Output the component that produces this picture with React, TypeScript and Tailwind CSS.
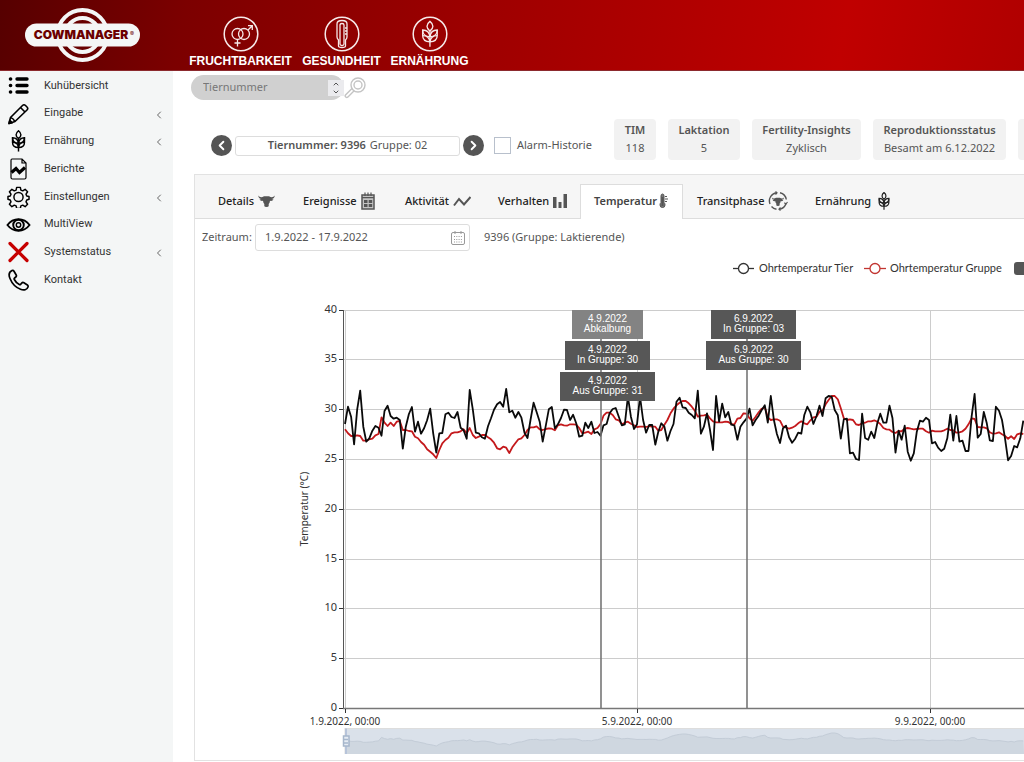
import React from 'react';
import { ChevronDown, ChevronLeft, ChevronRight, ChevronUp } from 'lucide-react';

// Hourly ear temperature samples, measured in thirds of a pixel below BAND_TOP
const BAND_TOP = 370;
const PLOT_LEFT = 345;
const DAY_WIDTH = 73;

const animalSamples = [
  162, 110, 140, 223, 118, 62, 170, 215, 205, 182, 168, 173, 197, 123, 107, 138, 146, 143, 150, 236, 170, 132, 111, 185,
  155, 191, 175, 151, 116, 190, 248, 190, 189, 133, 128, 141, 144, 126, 173, 181, 206, 60, 118, 188, 190, 202, 206, 169,
  145, 119, 103, 96, 110, 57, 127, 122, 143, 126, 143, 188, 204, 150, 98, 126, 155, 215, 167, 118, 111, 175, 163, 144,
  119, 120, 150, 134, 160, 200, 197, 158, 174, 155, 189, 186, 197, 166, 162, 130, 117, 114, 140, 166, 163, 80, 140, 177,
  163, 80, 150, 188, 165, 165, 224, 185, 160, 170, 212, 183, 162, 95, 83, 112, 114, 128, 135, 145, 62, 191, 170, 130,
  180, 240, 78, 155, 101, 142, 126, 164, 166, 209, 170, 157, 146, 116, 166, 150, 137, 120, 106, 158, 78, 150, 192, 219,
  175, 167, 202, 218, 206, 188, 191, 135, 110, 128, 162, 138, 107, 138, 85, 78, 80, 120, 136, 206, 148, 146, 250, 248,
  267, 270, 131, 204, 209, 185, 204, 160, 131, 158, 158, 107, 145, 248, 182, 209, 167, 245, 272, 250, 185, 152, 155, 143,
  150, 220, 216, 233, 243, 236, 205, 134, 212, 138, 215, 212, 243, 243, 140, 72, 203, 192, 126, 160, 211, 213, 110, 122,
  150, 205, 271, 258, 228, 232, 205, 152,
];

const groupSamples = [
  178, 190, 198, 198, 196, 198, 212, 212, 208, 206, 196, 192, 142, 158, 168, 158, 168, 155, 153, 180, 180, 183, 184, 200,
  205, 216, 224, 238, 245, 253, 264, 240, 220, 210, 203, 190, 187, 187, 184, 178, 190, 174, 195, 204, 200, 195, 195, 202,
  208, 218, 235, 238, 230, 233, 249, 232, 220, 208, 205, 195, 180, 172, 172, 169, 178, 180, 177, 175, 176, 181, 166, 163,
  166, 167, 163, 163, 164, 174, 190, 188, 185, 192, 178, 174, 162, 137, 128, 128, 135, 148, 151, 163, 158, 155, 161, 166,
  171, 170, 170, 171, 168, 170, 170, 182, 180, 164, 150, 130, 116, 106, 98, 93, 93, 100, 110, 122, 140, 137, 136, 134,
  145, 154, 157, 157, 157, 155, 156, 162, 164, 146, 144, 130, 131, 145, 152, 140, 127, 116, 112, 142, 150, 148, 148, 152,
  170, 172, 176, 173, 168, 160, 154, 160, 163, 151, 142, 140, 125, 122, 103, 90, 78, 78, 88, 115, 145, 150, 148, 150,
  163, 165, 160, 158, 154, 154, 151, 155, 162, 174, 178, 179, 186, 189, 183, 184, 176, 174, 176, 178, 177, 176, 176, 184,
  188, 182, 184, 184, 184, 181, 176, 180, 181, 188, 187, 184, 176, 163, 145, 147, 171, 172, 172, 175, 187, 191, 190, 187,
  193, 198, 206, 199, 207, 193, 190, 192,
];

const sampleX = (i: number) => PLOT_LEFT + (i * DAY_WIDTH) / 24;

const linePoints = (samples: number[]) =>
  samples.map((v, i) => `${sampleX(i).toFixed(1)},${(BAND_TOP + v / 3).toFixed(1)}`).join(' ');

const overviewPoints = groupSamples.map((v, i) => `${sampleX(i).toFixed(1)},${(727.5 + v * 0.07).toFixed(1)}`).join(' ');

const events = [
  { x: 572, y: 310, width: 71, date: '4.9.2022', label: 'Abkalbung', fill: '#838383' },
  { x: 565, y: 341, width: 85, date: '4.9.2022', label: 'In Gruppe: 30', fill: '#575757' },
  { x: 560, y: 372, width: 95, date: '4.9.2022', label: 'Aus Gruppe: 31', fill: '#575757' },
  { x: 711, y: 310, width: 85, date: '6.9.2022', label: 'In Gruppe: 03', fill: '#575757' },
  { x: 706, y: 341, width: 95, date: '6.9.2022', label: 'Aus Gruppe: 30', fill: '#575757' },
];

type IconProps = { className?: string };

function Logo() {
  return (
    <svg viewBox="0 0 116 56" className="h-14 w-[116px]" role="img" aria-label="CowManager">
      <g fill="none" stroke="#f4f6f6" strokeWidth="4">
        <circle cx="57.5" cy="28" r="25" />
        <circle cx="57.5" cy="28" r="17" />
      </g>
      <rect x="0" y="16.500" width="115" height="23" rx="11.500" fill="#f4f6f6" />
      <text x="56" y="32" textAnchor="middle" fontFamily="Inter, sans-serif" fontWeight="900" fontSize="12" fill="#6c0000">
        COWMANAGER
      </text>
      <text x="105" y="29" fontFamily="Inter, sans-serif" fontSize="6" fill="#6c0000">®</text>
    </svg>
  );
}

function WheatShape() {
  return (
    <>
      <path d="M12 23.500V9.500" />
      <path d="M12 9.500c-3.500-2.500-3.500-6 0-8.700 3.500 2.700 3.500 6.200 0 8.700z" />
      <path d="M12 14.500c-.5-4-3-6-6.500-6 0 3.500 2.500 6 6.500 6zM12 14.500c.5-4 3-6 6.500-6 0 3.500-2.500 6-6.500 6z" />
      <path d="M5.500 8.500v5c0 3.500 2.500 5.500 6.500 5.500 4 0 6.500-2 6.500-5.500v-5" />
      <path d="M5.500 13.500c3.500 0 6 1.500 6.500 5.500.5-4 3-5.500 6.500-5.500" />
    </>
  );
}

function WheatIcon({ className }: IconProps) {
  return (
    <svg viewBox="0 0 24 24" className={className} fill="none" stroke="currentColor" strokeWidth="1.600" aria-hidden="true">
      <WheatShape />
    </svg>
  );
}

function ListIcon({ className }: IconProps) {
  return (
    <svg viewBox="0 0 22 22" className={className} stroke="currentColor" strokeLinecap="round" aria-hidden="true">
      <path d="M9.500 4h10M9.500 10.500h10M9.500 17h10" strokeWidth="3.400" />
      <path d="M3 4h.1M3 10.500h.1M3 17h.1" strokeWidth="3.600" />
    </svg>
  );
}

function PencilIcon({ className }: IconProps) {
  return (
    <svg viewBox="0 0 22 22" className={className} fill="none" stroke="currentColor" strokeWidth="1.600" strokeLinejoin="round" aria-hidden="true">
      <path d="M1.500 20.500l1.500-6L15 2.500c1-1 2-1 3 0l1.500 1.500c1 1 1 2 0 3L7.500 18.500z" />
      <path d="M13 4.500l4.500 4.500M3 14.500q2.500.5 4.500 4" />
      <path d="M1.500 20.500l.8-3.300 2.500 2.500z" fill="currentColor" />
    </svg>
  );
}

function ReportIcon({ className }: IconProps) {
  return (
    <svg viewBox="0 0 22 22" className={className} fill="none" stroke="currentColor" aria-hidden="true">
      <path d="M4.500 1h10l4 4v14.500q0 1.500-1.500 1.500h-12q-1.500 0-1.500-1.500v-17q0-1.500 1-1.500zM14.500 1v4h4" strokeWidth="1.200" />
      <path d="M4 14.500l4.500-4 3.500 4 5.500-5" strokeWidth="3.200" />
    </svg>
  );
}

function GearIcon({ className }: IconProps) {
  return (
    <svg viewBox="0 0 24 24" className={className} fill="none" stroke="currentColor" strokeWidth="1.600" strokeLinejoin="round" aria-hidden="true">
      <circle cx="12" cy="12" r="5" />
      <path d="M10 1.500h4l.6 3 2 .8 2.600-1.700 2.700 2.700-1.700 2.600.8 2 2.500.6v3l-2.500.8-.8 2 1.700 2.600-2.700 2.700-2.600-1.700-2 .8-.6 2.800h-4l-.6-2.800-2-.8-2.600 1.700-2.700-2.700 1.700-2.600-.8-2-2.500-.8v-3l2.500-.6.8-2-1.700-2.600 2.700-2.700 2.600 1.700 2-.8z" />
    </svg>
  );
}

function EyeIcon({ className }: IconProps) {
  return (
    <svg viewBox="0 0 26 22" className={className} fill="none" stroke="currentColor" aria-hidden="true">
      <path d="M1.500 11C7.500 3 18.500 3 24.500 11C18.500 19 7.500 19 1.500 11z" strokeWidth="1.900" />
      <circle cx="13" cy="11" r="5.500" strokeWidth="2" />
      <circle cx="13" cy="11" r="2.300" strokeWidth="1.500" />
    </svg>
  );
}

function CrossIcon({ className }: IconProps) {
  return (
    <svg viewBox="0 0 22 22" className={className} stroke="#c60000" strokeWidth="3.200" strokeLinecap="round" aria-hidden="true">
      <path d="M2.500 2.500l17 17M19.500 2.500l-17 17" />
    </svg>
  );
}

function PhoneIcon({ className }: IconProps) {
  return (
    <svg viewBox="0 0 22 22" className={className} fill="none" stroke="currentColor" strokeWidth="1.700" strokeLinejoin="round" aria-hidden="true">
      <path d="M4.500 1.500C1.500 3 1 6 2.500 9.500c2 5 6 9 10.500 10.800 3.500 1.400 6.500.5 7.500-2.300.3-.8 0-1.500-.6-2l-3.500-2.300c-.8-.5-1.600-.3-2.200.4l-1 1.200c-.4.4-.9.500-1.400.2-2.300-1.300-4-3-5-5-.3-.6-.2-1.100.3-1.500l1.200-1c.7-.6.8-1.300.4-2L6.500 2.200c-.5-.8-1.200-1-2-.7z" />
    </svg>
  );
}

function FertilityIcon() {
  return (
    <svg viewBox="0 0 36 36" className="size-9" fill="none" stroke="#f6e9e9" strokeWidth="1.300" aria-hidden="true">
      <circle cx="18" cy="18" r="16.800" strokeWidth="1.500" />
      <circle cx="14.500" cy="18" r="5.500" />
      <circle cx="21" cy="18" r="5.500" />
      <path d="M14.500 23.500v7M11.500 27h6M25 14l4-4M25 9.700h4.300v4.300" />
    </svg>
  );
}

function ThermoCircleIcon() {
  return (
    <svg viewBox="0 0 36 36" className="size-9" fill="none" stroke="#f6e9e9" strokeWidth="1.300" aria-hidden="true">
      <circle cx="18" cy="18" r="16.800" strokeWidth="1.500" />
      <path d="M13 8q0-3.500 5-3.500t5 3.500v13q0 1.500-1.500 3v6q0 1.500-3.500 1.500t-3.500-1.500v-6q-1.500-1.500-1.500-3z" />
      <path d="M16 9q0-1.500 2-1.500t2 1.500v19q0 1.500-2 1.500t-2-1.500zM21 12h2M21 15h2M21 18h2" />
    </svg>
  );
}

function WheatCircleIcon() {
  return (
    <svg viewBox="0 0 36 36" className="size-9" fill="none" stroke="#f6e9e9" aria-hidden="true">
      <circle cx="18" cy="18" r="16.800" strokeWidth="1.500" />
      <g transform="translate(4.500 4.500) scale(1.120)" strokeWidth="1.200">
        <WheatShape />
      </g>
    </svg>
  );
}

function CowHead() {
  return (
    <path d="M.3 3.500Q1.500 5.600 4.500 5L6 4.300H11L12.500 5Q15.500 5.600 16.700 3.500Q16.500 6.700 13.500 7L15.500 7.500Q14.500 9.300 12 8.800Q11.800 11 10.700 12V14Q10.500 15 8.500 15T6.300 14V12Q5.200 11 5 8.800Q2.500 9.300 1.500 7.500L3.500 7Q.5 6.700.3 3.500z" />
  );
}

function CowIcon({ className }: IconProps) {
  return (
    <svg viewBox="0 0 17 18" className={className} fill="#555" aria-hidden="true">
      <CowHead />
    </svg>
  );
}

function CalendarGridIcon({ className }: IconProps) {
  return (
    <svg viewBox="0 0 14 18" className={className} fill="none" stroke="#555" aria-hidden="true">
      <path d="M1 3h12v14h-12z" strokeWidth="1.500" fill="#c4c4c4" />
      <path d="M1 5.700h12M4 .5v3.500M7 .5v3.500M10 .5v3.500" strokeWidth="1.200" />
      <path d="M3 9.500h3.500M7.700 9.500h3.500M3 13.500h3.500M7.700 13.500h3.500" strokeWidth="3" />
    </svg>
  );
}

function ActivityIcon({ className }: IconProps) {
  return (
    <svg viewBox="0 0 18 18" className={className} fill="none" stroke="#555" strokeWidth="2" aria-hidden="true">
      <path d="M1 13.500l5-6.500 5 5.500 6.500-7.500" />
    </svg>
  );
}

function BarsIcon({ className }: IconProps) {
  return (
    <svg viewBox="0 0 14 18" className={className} fill="#555" aria-hidden="true">
      <path d="M0 5h3.500v11h-3.500zM5.500 10h3v6h-3zM10.500 2h3.500v14h-3.500z" />
    </svg>
  );
}

function ThermoIcon({ className }: IconProps) {
  return (
    <svg viewBox="0 0 9 18" className={className} fill="none" stroke="#555" aria-hidden="true">
      <path d="M2 4q0-2 1.500-2t1.500 2v6.500q1 .8 1 2.500 0 2.500-2.500 2.500t-2.500-2.500q0-1.700 1-2.500z" fill="#777" />
      <path d="M3.500 5v9" strokeWidth="2" />
      <path d="M6 4.500h2M6 7h3M6 9.500h2" />
    </svg>
  );
}

function TransitIcon({ className }: IconProps) {
  return (
    <svg viewBox="0 0 20 20" className={className} fill="none" stroke="#555" strokeWidth="1.400" aria-hidden="true">
      <path d="M2 13a8.300 8.300 0 0 1 6.500-11.300M12 1.700a8.300 8.300 0 0 1 6.300 6.800M18 12.500a8.300 8.300 0 0 1-6.500 5.700M8.500 18.200a8.300 8.300 0 0 1-5-2.700" />
      <path d="M7.500 .5l1.500 1.300-1.500 1.700M19.500 11l-1.500 2-1.700-1.300M12.500 19.500l-1.500-1.300 1.500-1.700" strokeWidth="1.200" />
      <g transform="translate(3.500 3.500) scale(.76)" fill="#555" stroke="none">
        <CowHead />
      </g>
    </svg>
  );
}

const mainNav = [
  { label: 'FRUCHTBARKEIT', Icon: FertilityIcon, width: 'w-[107px]' },
  { label: 'GESUNDHEIT', Icon: ThermoCircleIcon, width: 'w-[81px]' },
  { label: 'ERNÄHRUNG', Icon: WheatCircleIcon, width: 'w-[81px]' },
];

const menuItems = [
  { label: 'Kuhübersicht', Icon: ListIcon, sub: false },
  { label: 'Eingabe', Icon: PencilIcon, sub: true },
  { label: 'Ernährung', Icon: WheatIcon, sub: true },
  { label: 'Berichte', Icon: ReportIcon, sub: false },
  { label: 'Einstellungen', Icon: GearIcon, sub: true },
  { label: 'MultiView', Icon: EyeIcon, sub: false },
  { label: 'Systemstatus', Icon: CrossIcon, sub: true },
  { label: 'Kontakt', Icon: PhoneIcon, sub: false },
];

const stats = [
  { label: 'TIM', value: '118', width: 'w-[42px]' },
  { label: 'Laktation', value: '5', width: 'w-[72px]' },
  { label: 'Fertility-Insights', value: 'Zyklisch', width: 'w-[109px]' },
  { label: 'Reproduktionsstatus', value: 'Besamt am 6.12.2022', width: 'w-[133px]' },
  { label: '', value: '', width: 'w-[90px]' },
];

const tabs = [
  { label: 'Details', Icon: CowIcon, iconClass: 'w-[17px] h-[18px]', width: 'w-[85px]' },
  { label: 'Ereignisse', Icon: CalendarGridIcon, iconClass: 'w-3.5 h-[18px]', width: 'w-[102px]' },
  { label: 'Aktivität', Icon: ActivityIcon, iconClass: 'size-[18px]', width: 'w-[93px]' },
  { label: 'Verhalten', Icon: BarsIcon, iconClass: 'w-3.5 h-[18px]', width: 'w-[96px]' },
  { label: 'Temperatur', Icon: ThermoIcon, iconClass: 'w-[9px] h-[18px]', width: 'w-[103px]' },
  { label: 'Transitphase', Icon: TransitIcon, iconClass: 'size-5', width: 'w-[118px]' },
  { label: 'Ernährung', Icon: WheatIcon, iconClass: 'size-[18px] text-[#222]', width: 'w-[100px]' },
];

function TemperatureChart() {
  const ticks = [0, 5, 10, 15, 20, 25, 30, 35, 40];
  return (
    <svg viewBox="195 252 829 508" className="block h-[508px] w-[829px]" fontFamily="'Noto Sans', sans-serif" fill="#333">
      {/* Legend */}
      <g fill="#fff" strokeWidth="1.300">
        <path d="M733 268.500h21" stroke="#333" />
        <circle cx="743.500" cy="268.500" r="5" stroke="#333" />
        <path d="M864 268.500h22" stroke="#c23531" />
        <circle cx="875" cy="268.500" r="5" stroke="#c23531" />
      </g>
      <g fontFamily="Lato, sans-serif" fontSize="11">
        <text x="759" y="272">Ohrtemperatur Tier</text>
        <text x="890" y="272">Ohrtemperatur Gruppe</text>
      </g>
      <rect x="1014" y="262" width="24" height="13" rx="3" fill="#555" />

      {/* Grid and axes */}
      {ticks.map(t => {
        const y = Math.floor(708.5 - t * 9.96) + 0.5;
        return (
          <g key={t}>
            {t > 0 && <path d={`M344 ${y}H1024`} stroke="#ccc" />}
            <path d={`M339 ${y}h5`} stroke="#333" />
            <text x="337" y={y + 2.5} textAnchor="end" fontSize="11">{t}</text>
          </g>
        );
      })}
      <path d="M345.500 310V708M637.500 310V708M930.500 310V708" stroke="#ccc" />
      <path d="M343.500 310V708" stroke="#555" />
      <path d="M343 708.500H1024" stroke="#777" strokeWidth="1.500" />
      <path d="M345.500 709v4M637.500 709v4M930.500 709v4" stroke="#333" />
      <g fontSize="10" textAnchor="middle">
        <text x="345" y="725">1.9.2022, 00:00</text>
        <text x="637" y="725">5.9.2022, 00:00</text>
        <text x="930" y="725">9.9.2022, 00:00</text>
        <text transform="translate(308 509) rotate(-90)">Temperatur (°C)</text>
      </g>

      {/* Series */}
      <g fill="none" strokeLinejoin="round">
        <polyline points={linePoints(groupSamples)} stroke="#c4191c" strokeWidth="1.800" />
        <polyline points={linePoints(animalSamples)} stroke="#0a0a0a" strokeWidth="1.800" />
      </g>
      <path d="M601 339V708M747 339V708" stroke="#777" strokeWidth="1.600" />

      {/* Event labels */}
      {events.map(e => (
        <g key={`${e.x}-${e.y}`}>
          <rect x={e.x} y={e.y} width={e.width} height="29" fill={e.fill} />
          <g fill="#fff" fontFamily="'Liberation Sans', sans-serif" fontSize="10" textAnchor="middle">
            <text x={e.x + e.width / 2} y={e.y + 12}>{e.date}</text>
            <text x={e.x + e.width / 2} y={e.y + 22}>{e.label}</text>
          </g>
        </g>
      ))}

      {/* Zoom slider */}
      <rect x="345" y="728.500" width="700" height="25" fill="#dae1ea" stroke="#ddd" />
      <polygon points={`345,754 ${overviewPoints} 1024,754`} fill="#cfd7e0" />
      <polyline points={overviewPoints} fill="none" stroke="#c3ccd7" />
      <path d="M346 728.500v25.500" stroke="#b7c4da" strokeWidth="2" />
      <rect x="343.500" y="736" width="5.500" height="10" fill="#e6ecf4" stroke="#a7b7cc" strokeWidth="1.500" />
      <path d="M344 739.500h4M344 743h4" stroke="#a7b7cc" strokeWidth="1.500" />
    </svg>
  );
}

export default function App() {
  return (
    <div className="flex min-h-screen flex-col overflow-hidden bg-white font-['Noto_Sans',sans-serif] text-[11px] text-[#555]">
      <header className="flex h-[71px] items-start border-b border-[#8c2a2e] bg-[linear-gradient(100deg,#560000_0%,#7c0000_18%,#9c0000_45%,#c00000_82%,#b00000_100%)]">
        <a href="#" className="ml-[25px] mt-[7px] shrink-0">
          <Logo />
        </a>
        <nav className="ml-[46px] mt-4 flex gap-[7px]">
          {mainNav.map(item => (
            <a
              key={item.label}
              href="#"
              className={`flex flex-col items-center font-['Liberation_Sans',sans-serif] text-[12px] font-bold leading-[18px] text-white ${item.width}`}
            >
              <item.Icon />
              {item.label}
            </a>
          ))}
        </nav>
      </header>

      <div className="flex flex-1">
        <aside className="w-[173px] shrink-0 bg-[#f4f6f6]">
          <nav className="grid h-[222px] auto-rows-fr">
            {menuItems.map(item => (
              <a key={item.label} href="#" className="flex items-center font-['Roboto',sans-serif] text-[#333]">
                <span className="flex w-9 shrink-0 justify-center pt-0.5 text-black">
                  <item.Icon className="h-[22px] w-[25px]" />
                </span>
                <span className="ml-2 flex-1 pt-0.5">{item.label}</span>
                {item.sub && <ChevronLeft size={12} className="mr-2 mt-1 text-[#666]" />}
              </a>
            ))}
          </nav>
        </aside>

        <main className="min-w-0 flex-1 overflow-hidden pl-[18px] pt-1">
          <form className="flex h-[25px] items-center" onSubmit={e => e.preventDefault()}>
            <div className="flex h-full w-[153px] items-center rounded-full bg-[#d0d0d0] pl-3">
              <input
                aria-label="Tiernummer"
                placeholder="Tiernummer"
                className="min-w-0 flex-1 bg-transparent outline-none placeholder:text-[#777]"
              />
              <button type="button" aria-label="Auswahl" className="flex h-4 w-4 flex-col items-center justify-center bg-[#ebebee] text-[#555]">
                <ChevronUp size={8} strokeWidth={3} />
                <ChevronDown size={8} strokeWidth={3} />
              </button>
            </div>
            <button type="submit" aria-label="Suchen">
              <svg viewBox="0 0 22 22" className="size-[22px]" fill="none" stroke="#c4c4c4" strokeWidth="1.400" aria-hidden="true">
                <circle cx="14" cy="8" r="7" />
                <circle cx="14" cy="8" r="4" />
                <path d="M8 11.500l-6.500 6.500q-.8 1.200.2 2t2 .2l6.500-6.500" />
              </svg>
            </button>
          </form>

          <div className="mt-[19px] flex h-[41px] items-center pl-5">
            <div className="flex shrink-0 items-center gap-[3px] pt-3">
              <button aria-label="Vorheriges Tier" className="flex size-[21px] items-center justify-center rounded-full bg-[#555] text-white">
                <ChevronLeft size={15} strokeWidth={3} />
              </button>
              <div className="flex h-5 w-[225px] items-center justify-center gap-1 rounded-[3px] border border-[#ddd]">
                <span className="font-semibold">Tiernummer: 9396</span>
                <span>Gruppe: 02</span>
              </div>
              <button aria-label="Nächstes Tier" className="flex size-[21px] items-center justify-center rounded-full bg-[#555] text-white">
                <ChevronRight size={15} strokeWidth={3} />
              </button>
            </div>
            <label className="ml-2.5 flex w-[120px] shrink-0 items-center gap-1.5 whitespace-nowrap pt-3">
              <input type="checkbox" className="size-[17px] appearance-none border border-[#b8c0cc] bg-white" />
              Alarm-Historie
            </label>
            <div className="flex gap-3">
              {stats.map((stat, i) => (
                <div
                  key={i}
                  className={`flex h-[41px] shrink-0 flex-col items-center whitespace-nowrap rounded-[4px] bg-[#f2f2f2] pt-0.5 leading-[18px] ${stat.width}`}
                >
                  <span className="font-semibold">{stat.label}</span>
                  <span>{stat.value}</span>
                </div>
              ))}
            </div>
          </div>

          <section className="ml-[3px] mt-[14px] border border-r-0 border-[#e2e2e2]">
            <div className="flex h-11 items-end border-b border-[#ddd] bg-[#f6f6f6] pl-[9px]" role="tablist">
              {tabs.map(tab => {
                const active = tab.label === 'Temperatur';
                return (
                  <button
                    key={tab.label}
                    role="tab"
                    aria-selected={active}
                    className={`flex shrink-0 items-center whitespace-nowrap ${tab.width} ${
                      active
                        ? '-mb-px h-[35px] gap-0.5 border border-b-0 border-[#ddd] bg-white px-[13px] pb-0.5 font-semibold text-[#444]'
                        : 'h-[34px] gap-1 px-3.5 font-medium text-[#222]'
                    }`}
                  >
                    {tab.label}
                    <tab.Icon className={`shrink-0 ${tab.iconClass}`} />
                  </button>
                );
              })}
            </div>

            <div className="flex h-[33px] items-center pl-[7px] pt-1">
              <label htmlFor="zeitraum" className="w-[53px]">Zeitraum:</label>
              <div className="flex h-[27px] w-[215px] items-center rounded-[3px] border border-[#ddd] px-1">
                <input id="zeitraum" defaultValue="1.9.2022 - 17.9.2022" className="min-w-0 flex-1 pl-[5px] outline-none" />
                <svg viewBox="0 0 14 14" className="size-3.5" fill="none" stroke="#999" aria-hidden="true">
                  <rect x=".5" y="1.500" width="13" height="12" rx="1.500" />
                  <path d="M4 0v3M10 0v3" />
                  <path d="M3 5.500h8M3 8.500h8M3 11h8" strokeDasharray="1 1.300" />
                </svg>
              </div>
              <span className="ml-3.5">9396 (Gruppe: Laktierende)</span>
            </div>

            <TemperatureChart />
          </section>
        </main>
      </div>
    </div>
  );
}
